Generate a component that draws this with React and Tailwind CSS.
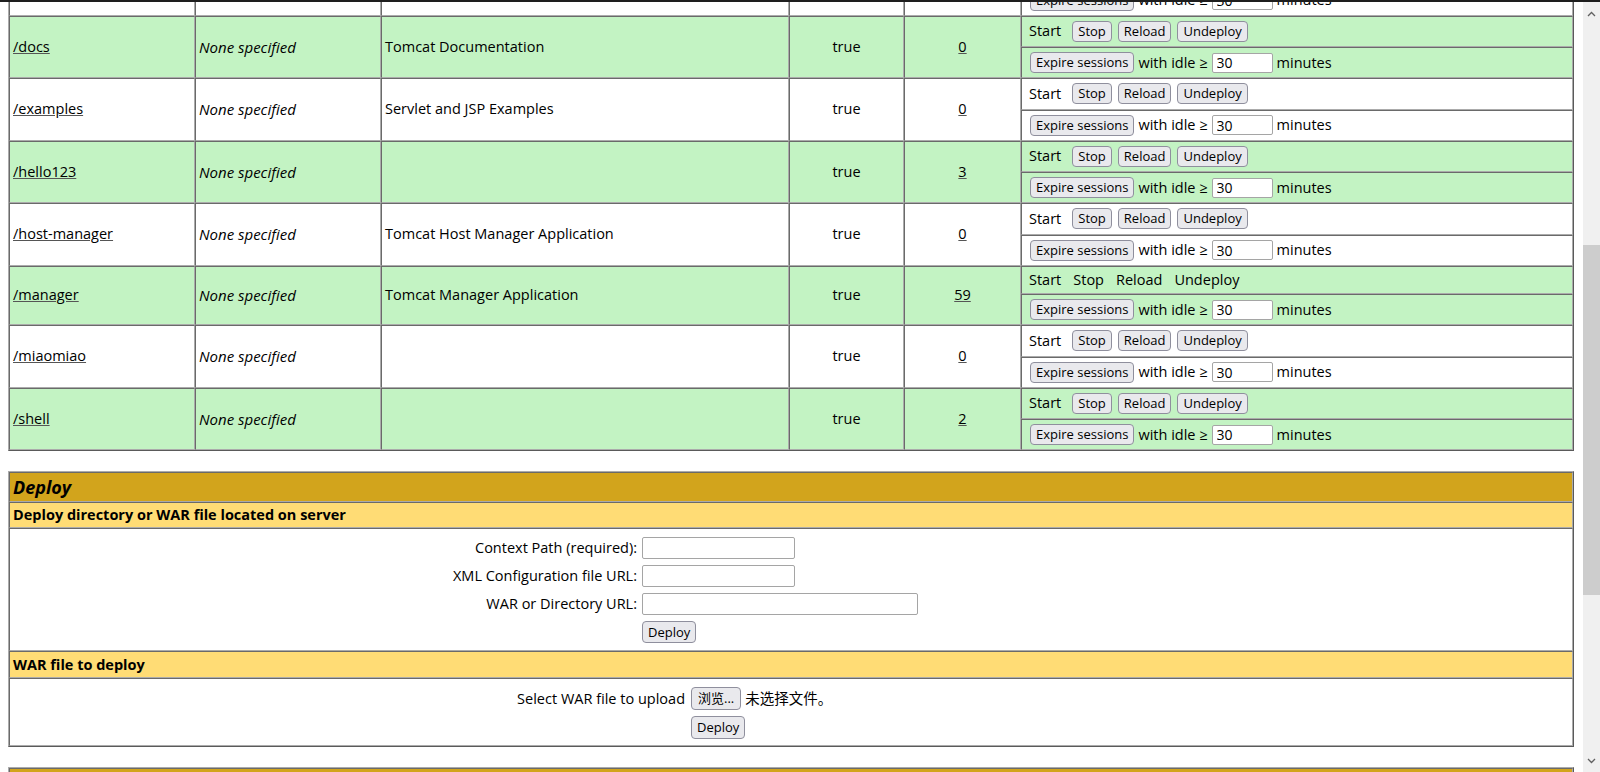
import React from 'react';

const apps = [
  { path: '/', display: 'Welcome to Tomcat', sessions: '0', green: false, offscreen: true },
  { path: '/docs', display: 'Tomcat Documentation', sessions: '0', green: true },
  { path: '/examples', display: 'Servlet and JSP Examples', sessions: '0', green: false },
  { path: '/hello123', display: '', sessions: '3', green: true },
  { path: '/host-manager', display: 'Tomcat Host Manager Application', sessions: '0', green: false },
  { path: '/manager', display: 'Tomcat Manager Application', sessions: '59', green: true, self: true },
  { path: '/miaomiao', display: '', sessions: '0', green: false },
  { path: '/shell', display: '', sessions: '2', green: true },
];

// inset cell borders like <table border="1">
const cell =
  'border border-t-[#6a6a6a] border-l-[#6a6a6a] border-b-[#ababab] border-r-[#ababab] px-[3px] py-0';
const outer =
  'border-separate border-spacing-0 border border-t-[#ababab] border-l-[#ababab] border-b-[#5a5a5a] border-r-[#5a5a5a]';

function Btn({ children, className = '' }) {
  return (
    <button
      type="button"
      className={`h-[21px] px-[5px] rounded-[4px] border border-[#8f8f9d] bg-[#e9e9ed] text-[13px] leading-none text-black ${className}`}
    >
      {children}
    </button>
  );
}

function TextInput({ className = '', value = '' }) {
  return (
    <input
      type="text"
      defaultValue={value}
      className={`border border-[#a5a5a5] rounded-[2px] bg-white px-[4px] text-[14px] leading-none text-black outline-none ${className}`}
    />
  );
}

function AppRow({ app }) {
  const bg = app.green ? 'bg-[#c3f3c3]' : 'bg-white';
  // the first row is scrolled mostly out of view, only its bottom edge shows
  const show = !app.offscreen;
  return (
    <>
      <tr className={bg}>
        <td rowSpan={2} className={`${cell} align-middle`}>
          {show && (
            <a href="#" className="text-black underline decoration-[#555]">
              {app.path}
            </a>
          )}
        </td>
        <td rowSpan={2} className={`${cell} align-middle italic text-[15px]`}>
          {show && 'None specified'}
        </td>
        <td rowSpan={2} className={`${cell} align-middle`}>
          {show && app.display}
        </td>
        <td rowSpan={2} className={`${cell} align-middle text-center`}>
          {show && 'true'}
        </td>
        <td rowSpan={2} className={`${cell} align-middle text-center`}>
          {show && (
            <a href="#" className="text-black underline decoration-[#555]">
              {app.sessions}
            </a>
          )}
        </td>
        <td className={`${cell} ${app.self ? 'h-[28.5px]' : 'h-[31.5px]'} pl-[7px]`}>
          {!show ? null : app.self ? (
            <div className="flex items-center gap-[12px]">
              <span>Start</span>
              <span>Stop</span>
              <span>Reload</span>
              <span>Undeploy</span>
            </div>
          ) : (
            <div className="flex items-center">
              <span className="mr-[11px]">Start</span>
              <Btn>Stop</Btn>
              <Btn className="ml-[6px]">Reload</Btn>
              <Btn className="ml-[6px]">Undeploy</Btn>
            </div>
          )}
        </td>
      </tr>
      <tr className={bg}>
        <td className={`${cell} h-[31px] pl-[8px]`}>
          <div className="flex items-center gap-[4px]">
            <Btn>Expire sessions</Btn>
            <span>with idle ≥</span>
            <TextInput value="30" className="w-[61px] h-[20px]" />
            <span>minutes</span>
          </div>
        </td>
      </tr>
    </>
  );
}

function Scrollbar() {
  return (
    <div className="w-[17px] bg-[#f0f0f0] flex flex-col items-center">
      <svg width="9" height="6" viewBox="0 0 9 6" className="mt-[9px]">
        <path d="M1 5 L4.5 1.5 L8 5" fill="none" stroke="#606060" strokeWidth="1.3" />
      </svg>
      <div className="mt-[228px] h-[350px] w-full bg-[#cdcdcd]" />
      <div className="flex-1" />
      <svg width="9" height="6" viewBox="0 0 9 6" className="mb-[8px]">
        <path d="M1 1 L4.5 4.5 L8 1" fill="none" stroke="#606060" strokeWidth="1.3" />
      </svg>
    </div>
  );
}

export default function App() {
  return (
    <div className="h-[772px] w-[1600px] overflow-hidden bg-white flex flex-col font-['Open_Sans','Noto_Sans_CJK_SC',sans-serif] text-[14.5px] text-black">
      <div className="h-[2px] bg-[#1e1e1e]" />
      <div className="flex flex-1 min-h-0">
        <div className="flex-1 overflow-hidden pl-[8px] pr-[9px]">
          <table className={`${outer} w-full table-fixed -mt-[50px]`}>
            <colgroup>
              <col className="w-[186px]" />
              <col className="w-[186px]" />
              <col className="w-[408px]" />
              <col className="w-[115px]" />
              <col className="w-[117px]" />
              <col />
            </colgroup>
            <tbody>
              {apps.map((app) => (
                <AppRow key={app.path} app={app} />
              ))}
            </tbody>
          </table>

          <table className={`${outer} w-full mt-[20px]`}>
            <tbody>
              <tr className="bg-[#d2a41c]">
                <td className={`${cell} h-[30px] text-[18px] font-bold italic`}>Deploy</td>
              </tr>
              <tr className="bg-[#ffdc75]">
                <td className={`${cell} h-[26px] font-bold`}>Deploy directory or WAR file located on server</td>
              </tr>
              <tr>
                <td className={`${cell} h-[123px] align-top pt-[5px]`}>
                  <div className="flex h-[28px] items-center">
                    <span className="w-[629px] pr-[5px] text-right">Context Path (required):</span>
                    <TextInput className="w-[153px] h-[22px]" />
                  </div>
                  <div className="flex h-[28px] items-center">
                    <span className="w-[629px] pr-[5px] text-right">XML Configuration file URL:</span>
                    <TextInput className="w-[153px] h-[22px]" />
                  </div>
                  <div className="flex h-[28px] items-center">
                    <span className="w-[629px] pr-[5px] text-right">WAR or Directory URL:</span>
                    <TextInput className="w-[276px] h-[22px]" />
                  </div>
                  <div className="flex h-[28px] items-center pl-[629px]">
                    <Btn className="h-[22px]">Deploy</Btn>
                  </div>
                </td>
              </tr>
              <tr className="bg-[#ffdc75]">
                <td className={`${cell} h-[27px] font-bold`}>WAR file to deploy</td>
              </tr>
              <tr>
                <td className={`${cell} h-[68px] align-top pt-[5px]`}>
                  <div className="flex h-[29px] items-center">
                    <span className="w-[678px] pr-[6px] text-right">Select WAR file to upload</span>
                    <Btn className="h-[23px] px-[6px]">浏览...</Btn>
                    <span className="ml-[4px]">未选择文件。</span>
                  </div>
                  <div className="flex h-[29px] items-center pl-[678px]">
                    <Btn className="h-[23px]">Deploy</Btn>
                  </div>
                </td>
              </tr>
            </tbody>
          </table>

          <table className={`${outer} w-full mt-[20px]`}>
            <tbody>
              <tr className="bg-[#d2a41c]">
                <td className={`${cell} h-[30px] text-[18px] font-bold italic`}>Diagnostics</td>
              </tr>
            </tbody>
          </table>
        </div>
        <Scrollbar />
      </div>
    </div>
  );
}
